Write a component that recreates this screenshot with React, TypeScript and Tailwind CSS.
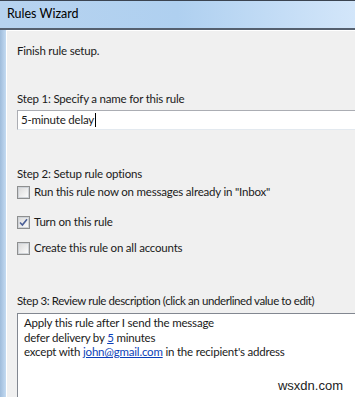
import React from "react";

function Checkbox({ checked }: { checked?: boolean }) {
  return (
    <span className="flex h-[13px] w-[13px] shrink-0 items-center justify-center border border-[#8e8f8f] bg-white">
      <span className="flex h-[11px] w-[11px] items-center justify-center border border-[#cfd3d8] bg-gradient-to-br from-[#dcdcdc] to-[#fbfbfb]">
        {checked && (
          <svg width="9" height="9" viewBox="0 0 9 9">
            <path d="M1 4.5 L3.4 7 L8 1.2" fill="none" stroke="#4a5f97" strokeWidth="1.6" />
          </svg>
        )}
      </span>
    </span>
  );
}

function Option({ label, checked, className }: { label: string; checked?: boolean; className?: string }) {
  return (
    <label className={"flex h-4 items-center gap-[4px] leading-4 " + (className ?? "")}>
      <Checkbox checked={checked} />
      <span>{label}</span>
    </label>
  );
}

export default function App() {
  return (
    <div className="relative h-[397px] w-[355px] overflow-hidden bg-[#f0f0f0] font-['Lato','Noto_Sans',sans-serif] text-[11.5px] tracking-[-0.2px] text-[#1a1a1a]">
      {/* title bar */}
      <div className="flex h-[30px] items-center border-t border-t-[#3b4451] border-b-2 border-b-[#55606f] bg-gradient-to-r from-[#b7d3ef] via-[#afd0f0] to-[#d3e6fa] pl-[7px]">
        <span className="text-[12.5px] tracking-normal text-black">Rules Wizard</span>
      </div>

      <div className="flex h-[367px]">
        {/* window frame */}
        <div className="w-[6px] shrink-0 bg-gradient-to-r from-[#9fbcdb] to-[#c4dbf2]" />

        <div className="min-w-0 flex-1 border-l border-t border-white pl-[10px]">
          <p className="mt-[12px] h-4 leading-4">Finish rule setup.</p>

          <p className="mt-[32px] h-4 leading-4">Step 1: Specify a name for this rule</p>
          <div className="mt-[3px] flex h-[20px] w-[360px] items-center border border-[#abadb3] border-b-[#e3e9ef] bg-white pl-[3px]">
            <span>5-minute delay</span>
            <span className="ml-px h-[14px] w-px bg-black" />
          </div>

          <p className="mt-[36px] h-4 leading-4">Step 2: Setup rule options</p>
          <Option className="mt-[2px]" label={'Run this rule now on messages already in "Inbox"'} />
          <Option className="mt-[14px]" label="Turn on this rule" checked />
          <Option className="mt-[10px]" label="Create this rule on all accounts" />

          <p className="mt-[37px] h-4 whitespace-nowrap leading-4 tracking-[-0.4px]">
            Step 3: Review rule description (click an underlined value to edit)
          </p>
          <div className="mt-[4px] h-[100px] w-[360px] border border-[#828790] bg-white pl-[6px] pt-[2px] leading-[14.5px]">
            <p className="h-[14.5px]">Apply this rule after I send the message</p>
            <p className="h-[14.5px]">
              defer delivery by <span className="text-[#0b3fb8] underline">5</span> minutes
            </p>
            <p className="h-[14.5px]">
              except with <span className="text-[#0b3fb8] underline">john@gmail.com</span> in the recipient's address
            </p>
          </div>
        </div>
      </div>

      <span className="absolute bottom-[2px] right-[12px] font-['Liberation_Sans',sans-serif] text-[13px] tracking-normal text-[#222]">
        wsxdn.com
      </span>
    </div>
  );
}
